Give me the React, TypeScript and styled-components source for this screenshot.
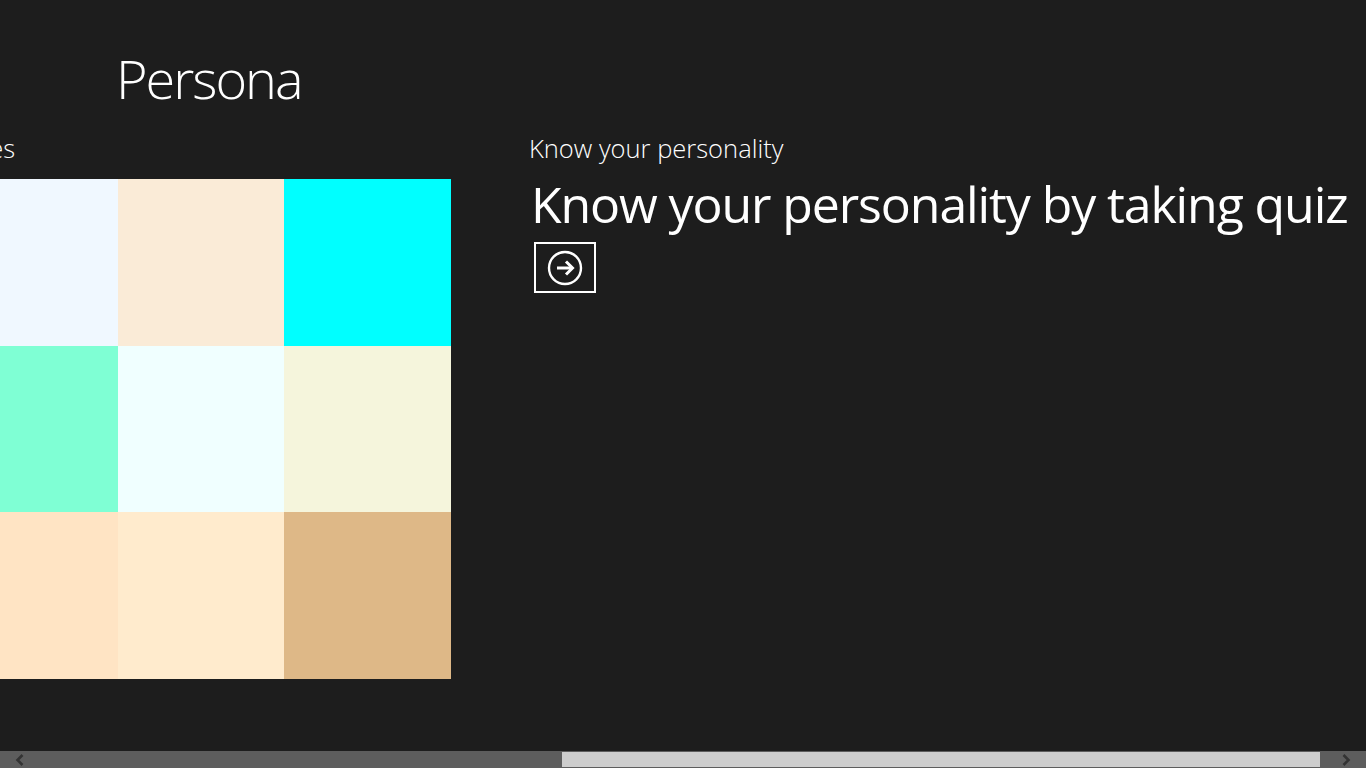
import React, { useLayoutEffect, useRef } from "react";
import styled, { createGlobalStyle } from "styled-components";

const GlobalStyle = createGlobalStyle`
  html, body {
    margin: 0;
    padding: 0;
    background: #1d1d1d;
    overflow: hidden;
  }
  * { box-sizing: border-box; }
`;

const Page = styled.div`
  width: 1366px;
  height: 768px;
  display: flex;
  flex-direction: column;
  background: #1d1d1d;
  color: #ffffff;
  font-family: "Open Sans", "Noto Sans", "DejaVu Sans", sans-serif;
`;

const Header = styled.header`
  padding: 51px 0 0 116px;
  height: 106px;
  flex: none;
`;

const Title = styled.h1`
  margin: 0;
  font-size: 54px;
  line-height: 1;
  font-weight: 300;
  letter-spacing: -2px;
`;

const Viewport = styled.div`
  flex: 1;
  overflow: hidden;
  padding-top: 30px;
`;

const Hub = styled.div`
  display: flex;
  gap: 78px;
  padding-left: 120px;
  width: max-content;
  padding-right: 120px;
`;

const Section = styled.section`
  display: flex;
  flex-direction: column;
`;

const SectionTitle = styled.h2`
  margin: 0 0 18px 0;
  font-size: 25.5px;
  line-height: 1;
  height: 25px;
  font-weight: 300;
  white-space: nowrap;
`;

const ClippedTitle = styled(SectionTitle)`
  margin-left: -2px;
`;

const Grid = styled.div`
  display: grid;
  grid-template-columns: repeat(3, 1fr);
  grid-template-rows: repeat(3, 1fr);
  width: 500px;
  height: 500px;
`;

const Cell = styled.div<{ $color: string }>`
  background: ${(p) => p.$color};
`;

const Headline = styled.p`
  margin: 0 0 13px 2px;
  font-size: 50px;
  line-height: 1;
  font-weight: 400;
  white-space: nowrap;
  letter-spacing: -1.1px;
`;

const GoButton = styled.button`
  margin-left: 5px;
  width: 62px;
  height: 51px;
  border: 2px solid #ffffff;
  background: transparent;
  display: flex;
  align-items: center;
  justify-content: center;
  padding: 0;
  cursor: pointer;
`;

const ScrollBar = styled.div`
  flex: none;
  height: 17px;
  display: flex;
  background: #5d5d5d;
`;

const ArrowButton = styled.div`
  width: 40px;
  display: flex;
  align-items: center;
  justify-content: center;
`;

const Track = styled.div`
  flex: 1;
  display: flex;
  align-items: center;
`;

const Thumb = styled.div`
  height: 15px;
  background: #cdcdcd;
`;

const colors = [
  "#F0F8FF",
  "#FAEBD7",
  "#00FFFF",
  "#7FFFD4",
  "#F0FFFF",
  "#F5F5DC",
  "#FFE4C4",
  "#FFEBCD",
  "#DEB887",
];

const CircleArrow = () => (
  <svg width="36" height="36" viewBox="0 0 36 36" fill="none">
    <circle cx="18" cy="18" r="16" stroke="#fff" strokeWidth="2.4" />
    <path d="M10 18 H25" stroke="#fff" strokeWidth="3" />
    <path d="M19 11.5 L25.5 18 L19 24.5" stroke="#fff" strokeWidth="3" strokeLinejoin="miter" />
  </svg>
);

const Chevron = ({ dir }: { dir: "left" | "right" }) => (
  <svg width="10" height="12" viewBox="0 0 10 12">
    <path
      d={dir === "left" ? "M7.5 1 L2.5 6 L7.5 11" : "M2.5 1 L7.5 6 L2.5 11"}
      stroke="#333"
      strokeWidth="2.6"
      fill="none"
    />
  </svg>
);

export default function App() {
  const ref = useRef<HTMLDivElement>(null);
  useLayoutEffect(() => {
    if (ref.current) ref.current.scrollLeft = 169;
  }, []);
  return (
    <Page>
      <GlobalStyle />
      <Header>
        <Title>Persona</Title>
      </Header>
      <Viewport ref={ref}>
        <Hub>
          <Section>
            <ClippedTitle>Types</ClippedTitle>
            <Grid>
              {colors.map((c) => (
                <Cell key={c} $color={c} />
              ))}
            </Grid>
          </Section>
          <Section>
            <SectionTitle>Know your personality</SectionTitle>
            <Headline>Know your personality by taking quiz</Headline>
            <GoButton aria-label="Take quiz">
              <CircleArrow />
            </GoButton>
          </Section>
        </Hub>
      </Viewport>
      <ScrollBar>
        <ArrowButton>
          <Chevron dir="left" />
        </ArrowButton>
        <Track>
          <Thumb style={{ marginLeft: 522, width: 758 }} />
        </Track>
        <ArrowButton>
          <Chevron dir="right" />
        </ArrowButton>
      </ScrollBar>
    </Page>
  );
}
